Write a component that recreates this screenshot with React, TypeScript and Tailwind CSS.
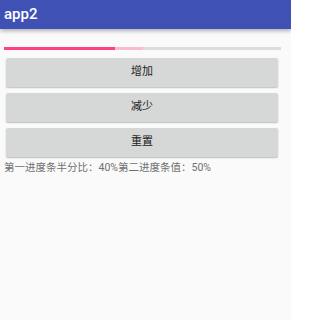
export default function App() {
  return (
    <div
      className="w-[291px] h-[320px] bg-[#fafafa] overflow-hidden"
      style={{ fontFamily: 'Roboto, "Noto Sans CJK SC", sans-serif' }}
    >
      <div className="h-[29px] bg-[#3f51b5] flex items-center pl-[4px] shadow-[0_2px_4px_rgba(0,0,0,0.3)]">
        <span className="text-white text-[15px] font-medium leading-none">app2</span>
      </div>
      <div className="px-[4px] pt-[18px]">
        <div className="relative h-[3px] w-[277px] bg-[#dcdcdc]">
          <div className="absolute left-0 top-0 h-full w-[50%] bg-[#f8bbd0]" />
          <div className="absolute left-0 top-0 h-full w-[40%] bg-[#ff4081]" />
        </div>
      </div>
      <div className="flex flex-col gap-[6px] px-[6px] pt-[8px] w-[284px]">
        {["增加", "减少", "重置"].map((t) => (
          <div
            key={t}
            className="h-[29px] bg-[#d6d7d7] rounded-[2px] shadow-[0_1px_1.5px_rgba(0,0,0,0.25)] flex items-center justify-center text-[11px] text-[#222]"
          >
            {t}
          </div>
        ))}
      </div>
      <div className="pl-[4px] pt-[4px] text-[10.5px] leading-[14px] text-[#707070]">
        第一进度条半分比：40%第二进度条值：50%
      </div>
    </div>
  );
}
